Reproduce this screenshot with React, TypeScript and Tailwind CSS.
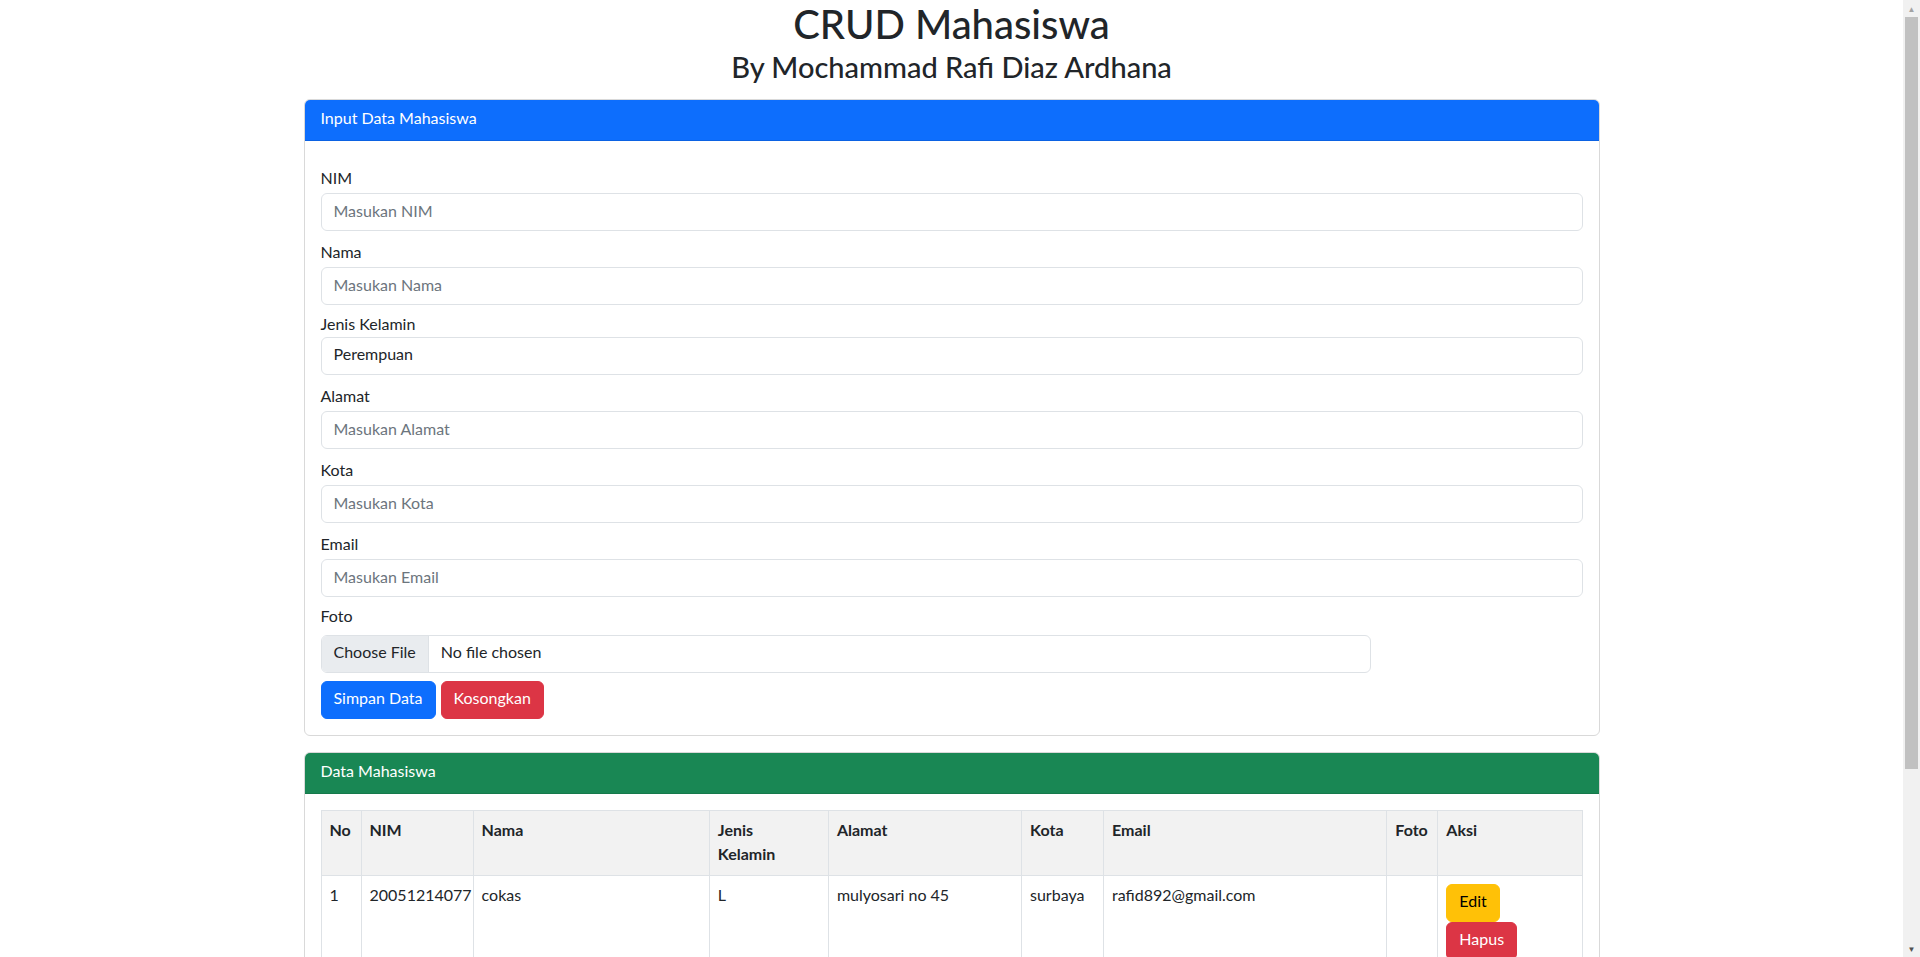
import type { ReactNode } from 'react'

type Mahasiswa = {
  nim: string
  nama: string
  jk: string
  alamat: string
  kota: string
  email: string
}

const rows: Mahasiswa[] = [
  {
    nim: '20051214077',
    nama: 'cokas',
    jk: 'L',
    alamat: 'mulyosari no 45',
    kota: 'surbaya',
    email: 'rafid892@gmail.com',
  },
]

function Field({
  label,
  gap,
  labelGap = 'mb-px pb-[4px]',
  children,
}: {
  label: string
  gap: string
  labelGap?: string
  children: ReactNode
}) {
  return (
    <div className={gap}>
      <label className={`block leading-5 ${labelGap}`}>{label}</label>
      {children}
    </div>
  )
}

function TextInput({ placeholder }: { placeholder: string }) {
  return (
    <input
      type="text"
      placeholder={placeholder}
      className="block h-[38px] w-full rounded-md border border-[#dee2e6] bg-white px-3 pt-[6px] pb-[10px] leading-5 text-[#212529] outline-none placeholder:text-[#6c757d]"
    />
  )
}

function Card({ title, color, children }: { title: string; color: string; children: ReactNode }) {
  return (
    <div className="overflow-hidden rounded-md border border-[#d9d9d9] bg-white">
      <div className={`border-b border-black/10 px-4 pt-2 pb-3 leading-5 text-white ${color}`}>{title}</div>
      <div className="p-4">{children}</div>
    </div>
  )
}

const btn = 'rounded-md border px-3 pt-1.5 pb-2.5 leading-5'
const th = 'border border-[#dee2e6] px-2 pt-2 pb-[10px] text-left align-top font-bold leading-[22px]'
const td = 'border border-[#dee2e6] px-2 pt-2 pb-[10px] align-top leading-[22px]'

function Scrollbar() {
  return (
    <div className="flex h-screen w-[17px] shrink-0 flex-col bg-[#f1f1f1]">
      <div className="flex h-[17px] items-center justify-center text-[8px] leading-none text-[#a3a3a3]">▲</div>
      <div className="mx-[2px] h-[752px] bg-[#c1c1c1]" />
      <div className="flex-1" />
      <div className="flex h-[17px] items-center justify-center text-[8px] leading-none text-[#505050]">▼</div>
    </div>
  )
}

export default function App() {
  return (
    <div className="flex h-screen overflow-hidden bg-white font-[Lato,'Noto_Sans',sans-serif] text-base text-[#212529]">
      <main className="w-[1903px] shrink-0">
        <div className="mx-auto w-[1320px] px-3 pb-6">
          <h1 className="text-center text-[40px] font-medium leading-[48px]">CRUD Mahasiswa</h1>
          <h3 className="mt-[2px] text-center text-[29px] font-medium leading-[34px]">
            By Mochammad Rafi Diaz Ardhana
          </h3>

          <div className="mt-[15px]">
            <Card title="Input Data Mahasiswa" color="bg-[#0d6efd]">
              <Field label="NIM" gap="mt-[11px]">
                <TextInput placeholder="Masukan NIM" />
              </Field>
              <Field label="Nama" gap="mt-[11px]">
                <TextInput placeholder="Masukan Nama" />
              </Field>
              <Field label="Jenis Kelamin" gap="mt-[9px]" labelGap="pb-[3px]">
                <select
                  defaultValue="P"
                  className="block h-[38px] w-full appearance-none rounded-md border border-[#dee2e6] bg-white px-3 pt-[6px] pb-[10px] leading-5 text-[#212529] outline-none"
                >
                  <option value="P">Perempuan</option>
                  <option value="L">Laki-laki</option>
                </select>
              </Field>
              <Field label="Alamat" gap="mt-[11px]">
                <TextInput placeholder="Masukan Alamat" />
              </Field>
              <Field label="Kota" gap="mt-[11px]">
                <TextInput placeholder="Masukan Kota" />
              </Field>
              <Field label="Email" gap="mt-[11px]">
                <TextInput placeholder="Masukan Email" />
              </Field>
              <Field label="Foto" gap="mt-[9px]" labelGap="mb-[5px] pb-[4px]">
                <div className="flex h-[38px] w-[1050px] overflow-hidden rounded-md border border-[#dee2e6] bg-white">
                  <span className="flex items-center border-r border-[#dee2e6] bg-[#e9ecef] px-3 pb-[4px]">
                    Choose File
                  </span>
                  <span className="flex items-center px-3 pb-[4px]">No file chosen</span>
                </div>
              </Field>
              <div className="mt-2 flex gap-[5px]">
                <button className={`${btn} border-[#0d6efd] bg-[#0d6efd] text-white`}>Simpan Data</button>
                <button className={`${btn} border-[#dc3545] bg-[#dc3545] text-white`}>Kosongkan</button>
              </div>
            </Card>
          </div>

          <div className="mt-4">
            <Card title="Data Mahasiswa" color="bg-[#198754]">
              <table className="w-full table-fixed border-collapse border border-[#dee2e6]">
                <colgroup>
                  <col className="w-[40px]" />
                  <col className="w-[112px]" />
                  <col className="w-[236px]" />
                  <col className="w-[119px]" />
                  <col className="w-[193px]" />
                  <col className="w-[82px]" />
                  <col className="w-[283px]" />
                  <col className="w-[51px]" />
                  <col className="w-[144px]" />
                </colgroup>
                <thead>
                  <tr className="bg-[#f2f2f2]">
                    <th className={th}>No</th>
                    <th className={th}>NIM</th>
                    <th className={th}>Nama</th>
                    <th className={th}>
                      <span className="block">Jenis</span>
                      <span className="block pt-[2px]">Kelamin</span>
                    </th>
                    <th className={th}>Alamat</th>
                    <th className={th}>Kota</th>
                    <th className={th}>Email</th>
                    <th className={th}>Foto</th>
                    <th className={th}>Aksi</th>
                  </tr>
                </thead>
                <tbody>
                  {rows.map((r, i) => (
                    <tr key={r.nim}>
                      <td className={td}>{i + 1}</td>
                      <td className={td}>{r.nim}</td>
                      <td className={td}>{r.nama}</td>
                      <td className={td}>{r.jk}</td>
                      <td className={td}>{r.alamat}</td>
                      <td className={td}>{r.kota}</td>
                      <td className={td}>{r.email}</td>
                      <td className={td}></td>
                      <td className={td}>
                        <div className="flex flex-col items-start">
                          <button className={`${btn} border-[#ffc107] bg-[#ffc107] text-black`}>Edit</button>
                          <button className={`${btn} border-[#dc3545] bg-[#dc3545] text-white`}>Hapus</button>
                        </div>
                      </td>
                    </tr>
                  ))}
                </tbody>
              </table>
            </Card>
          </div>
        </div>
      </main>
      <Scrollbar />
    </div>
  )
}
